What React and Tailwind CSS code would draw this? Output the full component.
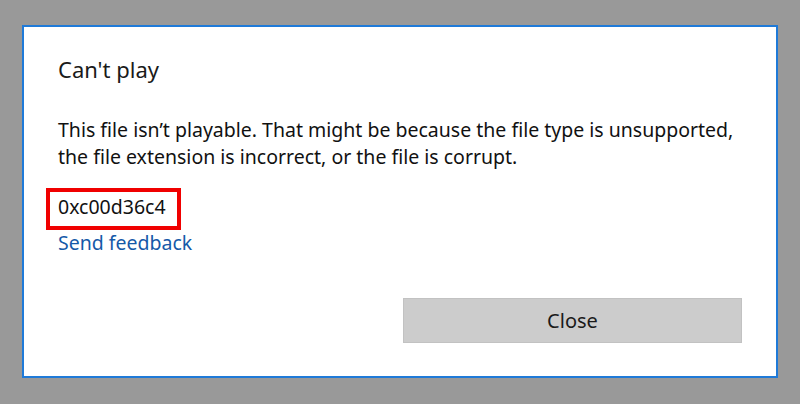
export default function App() {
  const font = { fontFamily: '"Noto Sans", "Open Sans", sans-serif' };
  return (
    <div className="w-[800px] h-[404px] bg-[#999999] pt-[25px] pl-[22px]" style={font}>
      <div className="w-[756px] h-[353px] bg-white border-2 border-[#1f7ad8] flex flex-col pt-[27px]">
        <div className="ml-[34px] text-[22px] leading-[30px] text-[#1a1a1a]">Can't play</div>
        <div className="ml-[34px] mt-[32px] text-[19.5px] leading-[27px] text-[#111]">
          <div>This file isn’t playable. That might be because the file type is unsupported,</div>
          <div>the file extension is incorrect, or the file is corrupt.</div>
        </div>
        <div className="ml-[22px] mt-[18px] self-start border-4 border-[#f00000] pl-[8px] pr-[11px] pt-[3px] pb-[7px] text-[19.5px] leading-[24px] text-[#111]">
          0xc00d36c4
        </div>
        <div className="ml-[34px] mt-[1px] text-[19.5px] leading-[24px] text-[#1559a8]">Send feedback</div>
        <div className="flex justify-end pr-[34px] mt-[43px]">
          <div className="w-[339px] h-[45px] bg-[#cccccc] border border-[#c2c2c2] flex items-center justify-center text-[20px] text-[#1a1a1a]">
            Close
          </div>
        </div>
      </div>
    </div>
  );
}
